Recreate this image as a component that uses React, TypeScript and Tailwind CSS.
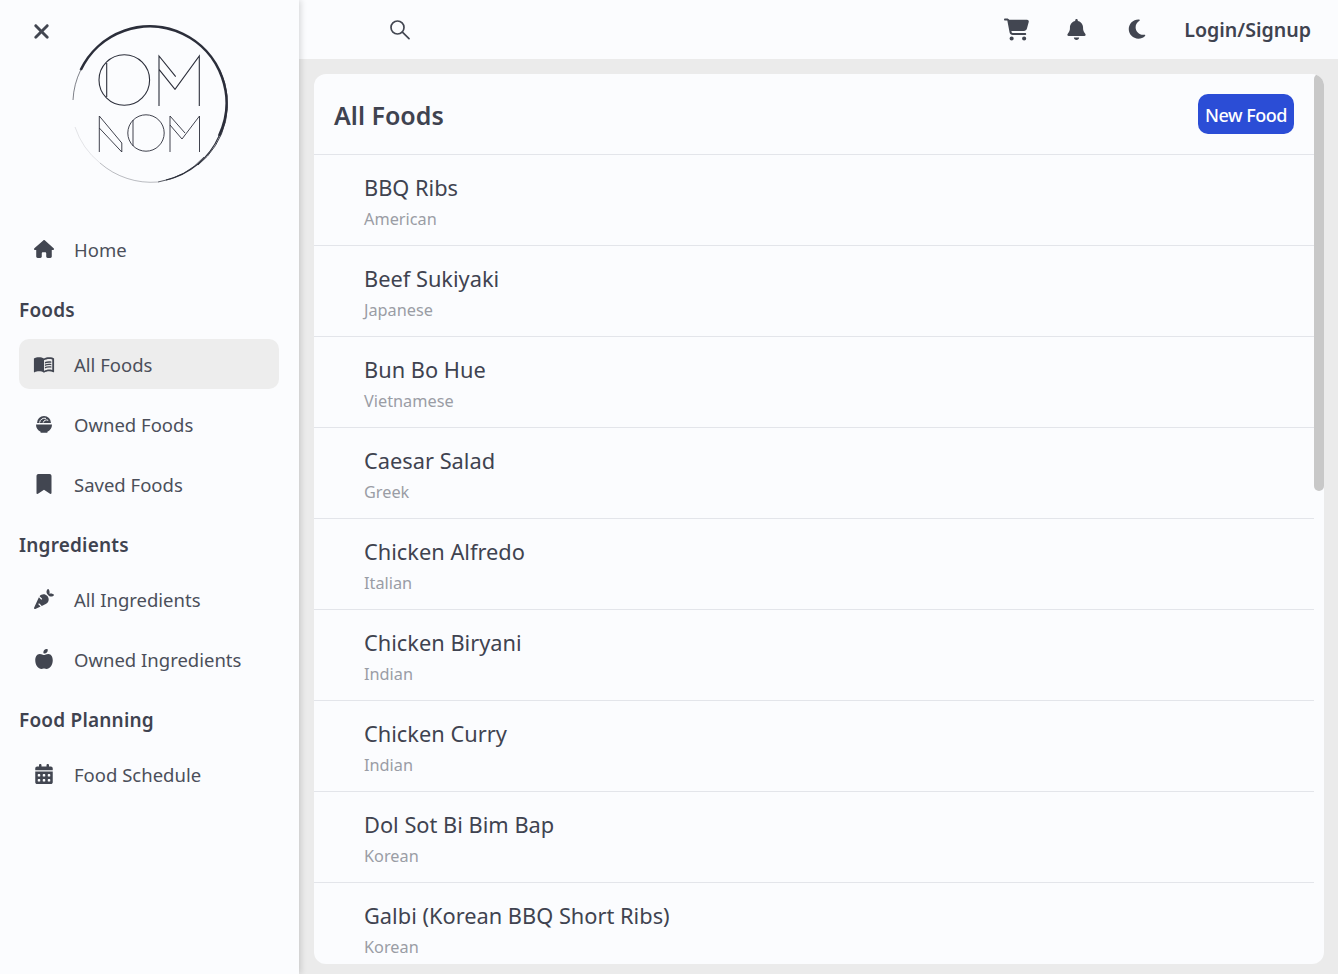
import { FaAppleWhole, FaBell, FaBookmark, FaCalendarDays, FaCarrot, FaCartShopping, FaHouse, FaMoon, FaXmark } from "react-icons/fa6";
import { MdMenuBook } from "react-icons/md";
import type { ReactNode } from "react";

const foods = [
  ["BBQ Ribs", "American"],
  ["Beef Sukiyaki", "Japanese"],
  ["Bun Bo Hue", "Vietnamese"],
  ["Caesar Salad", "Greek"],
  ["Chicken Alfredo", "Italian"],
  ["Chicken Biryani", "Indian"],
  ["Chicken Curry", "Indian"],
  ["Dol Sot Bi Bim Bap", "Korean"],
  ["Galbi (Korean BBQ Short Ribs)", "Korean"],
];

function Logo() {
  return (
    <svg viewBox="0 0 160 162" className="h-[162px] w-[160px]" fill="none" stroke="#2b2e3a" role="img" aria-label="Om Nom">
      {/* brush ring */}
      <path d="M10.7 48A76.5 76.5 0 1 1 149 114" strokeWidth="2.6" />
      <path d="M3 78A76.5 76.5 0 0 1 10.7 48" strokeWidth="1" opacity="0.6" />
      <path d="M150 48.6A78 78 0 0 1 128 143" strokeWidth="0.9" />
      <path d="M149 114A77 77 0 0 1 96 158" strokeWidth="1.1" />
      <path d="M134 135A78 78 0 0 1 88 160" strokeWidth="0.8" />
      <path d="M30 141A78 78 0 0 0 88 160" strokeWidth="0.7" opacity="0.45" />
      <path d="M5 105A78 78 0 0 0 30 141" strokeWidth="0.6" opacity="0.2" />
      {/* top row */}
      <g strokeWidth="1.1">
        <circle cx="54.3" cy="58" r="25.3" />
        <path d="M36.7 41v34" />
        <path d="M89 84V34l16.7 20.7M89 47.3l16 20 24.3-33.3V84" />
      </g>
      {/* bottom row */}
      <g strokeWidth="0.9">
        <path d="M29.3 130V94l22.5 27v9M29.3 106l22.5 24" />
        <circle cx="76" cy="111" r="18.2" />
        <path d="M63 98v26" />
        <path d="M100 130V94l15 17M100 103l12 14 17.5-23v36" />
      </g>
    </svg>
  );
}

function BowlIcon() {
  return (
    <svg viewBox="0 0 20 20" className="h-5 w-5" fill="currentColor">
      <path d="M2 10.5h16a8 8 0 0 1-4.6 7.2v1h-6.8v-1A8 8 0 0 1 2 10.5z" />
      <path d="M3 9a7 7 0 0 1 14 0z" />
      <path d="M5.6 8.6a5 5 0 0 1 6.4-4.2M9.2 8.6a3.4 3.4 0 0 1 5-2.2" fill="none" stroke="#fbfcfe" strokeWidth="1" />
    </svg>
  );
}

function SearchIcon() {
  return (
    <svg viewBox="0 0 20 20" className="ml-[91px] h-5 w-5 text-[#424651]" fill="none" stroke="currentColor" strokeWidth="1.7" strokeLinecap="round">
      <circle cx="7.5" cy="7.5" r="6.5" />
      <path d="M12.4 12.2l6.6 6.4" />
    </svg>
  );
}

function NavItem({ icon, label, active }: { icon: ReactNode; label: string; active?: boolean }) {
  return (
    <div className={`flex h-[50px] items-center rounded-[10px] ${active ? "bg-[#ededed]" : ""}`}>
      <span className="flex w-[50px] justify-center text-[#424651]">{icon}</span>
      <span className="ml-[5px] mt-[2px] text-[18.5px] text-[#4b4f5a]">{label}</span>
    </div>
  );
}

function SectionTitle({ children }: { children: ReactNode }) {
  return <div className="mt-[23px] flex h-[25px] items-center pt-[1px] text-[19px] font-semibold tracking-[0.2px] text-[#3f4350]">{children}</div>;
}

export default function App() {
  return (
    <div className="flex h-screen overflow-hidden bg-[#ebebeb] font-['Noto_Sans','Open_Sans',sans-serif]">
      <aside className="z-10 flex w-[299px] shrink-0 flex-col bg-[#fbfcfe] shadow-[2px_0_6px_rgba(0,0,0,0.14)]">
        <div className="relative h-[224px]">
          <FaXmark className="absolute left-[30px] top-[20px] text-[#424651]" size={23} />
          <div className="flex pl-[70px] pt-[22px]">
            <Logo />
          </div>
        </div>
        <div className="flex flex-col pl-[19px] pr-5">
          <NavItem icon={<FaHouse size={20} />} label="Home" />
          <SectionTitle>Foods</SectionTitle>
          <div className="mt-[17px] flex flex-col gap-[10px]">
            <NavItem active icon={<MdMenuBook size={22} />} label="All Foods" />
            <NavItem icon={<BowlIcon />} label="Owned Foods" />
            <NavItem icon={<FaBookmark size={20} />} label="Saved Foods" />
          </div>
          <SectionTitle>Ingredients</SectionTitle>
          <div className="mt-[17px] flex flex-col gap-[10px]">
            <NavItem icon={<FaCarrot size={20} />} label="All Ingredients" />
            <NavItem icon={<FaAppleWhole size={20} />} label="Owned Ingredients" />
          </div>
          <SectionTitle>Food Planning</SectionTitle>
          <div className="mt-[17px]">
            <NavItem icon={<FaCalendarDays size={20} />} label="Food Schedule" />
          </div>
        </div>
      </aside>

      <div className="flex min-w-0 flex-1 flex-col">
        <header className="flex h-[59px] shrink-0 items-center bg-[#fbfcfe] pr-[27px]">
          <SearchIcon />
          <div className="ml-auto flex items-center">
            <FaCartShopping className="text-[#424651]" size={25} />
            <FaBell className="ml-[37px] text-[#424651]" size={21} />
            <FaMoon className="ml-[39px] text-[#424651]" size={22} />
            <span className="ml-[36px] pt-[1px] text-[19.6px] font-semibold text-[#3f4350]">Login/Signup</span>
          </div>
        </header>

        <main className="mb-[10px] ml-[15px] mr-[14px] mt-[15px] flex min-h-0 flex-1 overflow-hidden rounded-xl bg-[#fbfcfe]">
          <div className="min-w-0 flex-1">
            <div className="flex h-[81px] items-center justify-between border-b border-[#e3e5ea] pl-5 pr-5">
              <h1 className="pt-[4px] text-[25px] font-semibold text-[#3f4350]">All Foods</h1>
              <button type="button" className="h-10 w-24 rounded-[10px] bg-[#2b4dd6] pt-[2px] text-[18px] font-medium tracking-[-0.5px] text-white">
                New Food
              </button>
            </div>
            {foods.map(([name, cuisine]) => (
              <div key={name} className="flex h-[91px] flex-col justify-center border-b border-[#e3e5ea] pl-[50px] pt-[3px]">
                <div className="text-[21.8px] leading-[30px] text-[#3f4350]">{name}</div>
                <div className="mt-[4px] text-[16.3px] leading-[24px] text-[#9a9da5]">{cuisine}</div>
              </div>
            ))}
          </div>
          <div className="w-[10px] shrink-0">
            <div className="h-[417px] rounded-full bg-[#c8c8c8]" />
          </div>
        </main>
      </div>
    </div>
  );
}
